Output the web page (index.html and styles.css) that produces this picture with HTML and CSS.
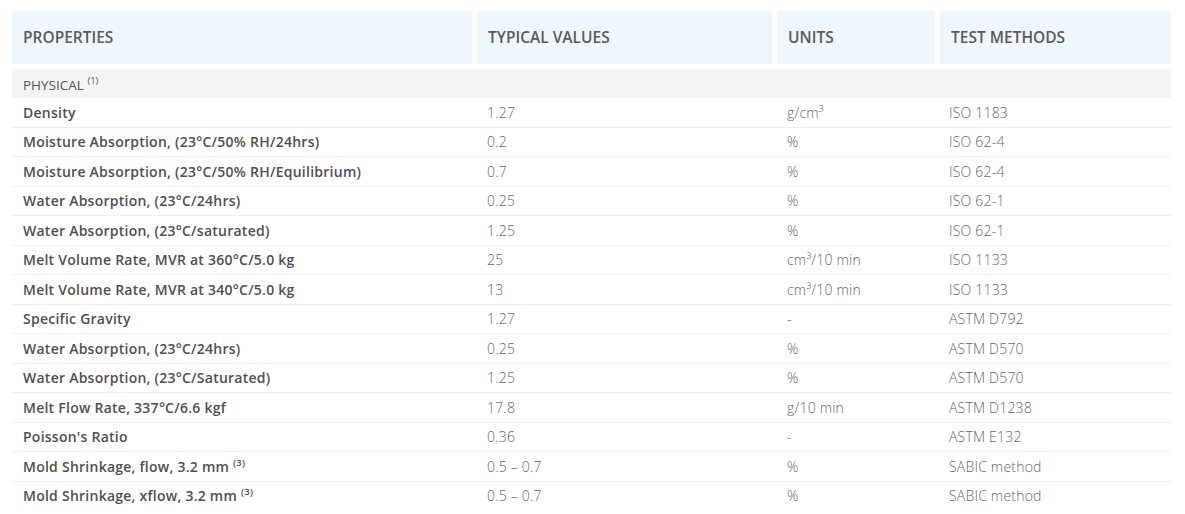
FILE: index.html
```html
<!DOCTYPE html>
<html lang="en">
<head>
<meta charset="utf-8">
<title>Properties</title>
<link rel="stylesheet" href="styles.css">
</head>
<body>
<table class="props">
  <colgroup>
    <col class="c1"><col class="c2"><col class="c3"><col class="c4">
  </colgroup>
  <thead>
    <tr>
      <th class="h">PROPERTIES</th>
      <th class="h">TYPICAL VALUES</th>
      <th class="h">UNITS</th>
      <th class="h last">TEST METHODS</th>
    </tr>
  </thead>
  <tbody>
    <tr class="group"><td colspan="4">PHYSICAL <sup>(1)</sup></td></tr>
    <tr><td class="p">Density</td><td class="v">1.27</td><td class="v">g/cm³</td><td class="m">ISO 1183</td></tr>
    <tr><td class="p">Moisture Absorption, (23°C/50% RH/24hrs)</td><td class="v">0.2</td><td class="v">%</td><td class="m">ISO 62-4</td></tr>
    <tr><td class="p">Moisture Absorption, (23°C/50% RH/Equilibrium)</td><td class="v">0.7</td><td class="v">%</td><td class="m">ISO 62-4</td></tr>
    <tr><td class="p">Water Absorption, (23°C/24hrs)</td><td class="v">0.25</td><td class="v">%</td><td class="m">ISO 62-1</td></tr>
    <tr><td class="p">Water Absorption, (23°C/saturated)</td><td class="v">1.25</td><td class="v">%</td><td class="m">ISO 62-1</td></tr>
    <tr><td class="p">Melt Volume Rate, MVR at 360°C/5.0 kg</td><td class="v">25</td><td class="v">cm³/10 min</td><td class="m">ISO 1133</td></tr>
    <tr><td class="p">Melt Volume Rate, MVR at 340°C/5.0 kg</td><td class="v">13</td><td class="v">cm³/10 min</td><td class="m">ISO 1133</td></tr>
    <tr><td class="p">Specific Gravity</td><td class="v">1.27</td><td class="v">-</td><td class="m">ASTM D792</td></tr>
    <tr><td class="p">Water Absorption, (23°C/24hrs)</td><td class="v">0.25</td><td class="v">%</td><td class="m">ASTM D570</td></tr>
    <tr><td class="p">Water Absorption, (23°C/Saturated)</td><td class="v">1.25</td><td class="v">%</td><td class="m">ASTM D570</td></tr>
    <tr><td class="p">Melt Flow Rate, 337°C/6.6 kgf</td><td class="v">17.8</td><td class="v">g/10 min</td><td class="m">ASTM D1238</td></tr>
    <tr><td class="p">Poisson's Ratio</td><td class="v">0.36</td><td class="v">-</td><td class="m">ASTM E132</td></tr>
    <tr><td class="p">Mold Shrinkage, flow, 3.2 mm <sup>(3)</sup></td><td class="v">0.5 – 0.7</td><td class="v">%</td><td class="m">SABIC method</td></tr>
    <tr><td class="p">Mold Shrinkage, xflow, 3.2 mm <sup>(3)</sup></td><td class="v">0.5 – 0.7</td><td class="v">%</td><td class="m">SABIC method</td></tr>
  </tbody>
</table>
</body>
</html>
```
FILE: styles.css
```css
html, body {
  margin: 0;
  padding: 0;
  background: #fff;
}
body {
  padding: 11px 14px 0 12px;
  font-family: "Open Sans", "Liberation Sans", sans-serif;
  color: #555;
}
.props {
  width: 1159px;
  border-collapse: separate;
  border-spacing: 0;
  table-layout: fixed;
}
.c1 { width: 465px; }
.c2 { width: 300px; }
.c3 { width: 163px; }
.c4 { width: 231px; }

.h {
  height: 51px;
  padding: 0 0 2px 11px;
  text-align: left;
  font-size: 15.5px;
  font-weight: 600;
  color: #5a5a5a;
  background: #eff7fc;
  background-clip: padding-box;
  border-right: 5px solid #fff;
  border-bottom: 5px solid #fff;
  box-sizing: content-box;
}
.h.last { border-right: 0; }

td {
  height: 28.5px;
  padding: 0 0 0 10px;
  font-size: 14px;
  border-bottom: 1px solid #eeeeee;
  white-space: nowrap;
}
.group td {
  background: #f4f4f4;
  border-bottom: 0;
  height: 27px;
  font-size: 13.5px;
  color: #555;
  padding-left: 11px;
  padding-top: 2px;
}
sup {
  font-size: 9.5px;
  vertical-align: 6px;
  line-height: 0;
}
td.p {
  padding-left: 11px;
  font-weight: 600;
  color: #4f4f4f;
  letter-spacing: 0.25px;
}
td.v, td.m {
  font-weight: 300;
  color: #666;
  letter-spacing: 0.2px;
}
td.m { padding-left: 9px; }
tr:last-child td { border-bottom: 0; }
```
